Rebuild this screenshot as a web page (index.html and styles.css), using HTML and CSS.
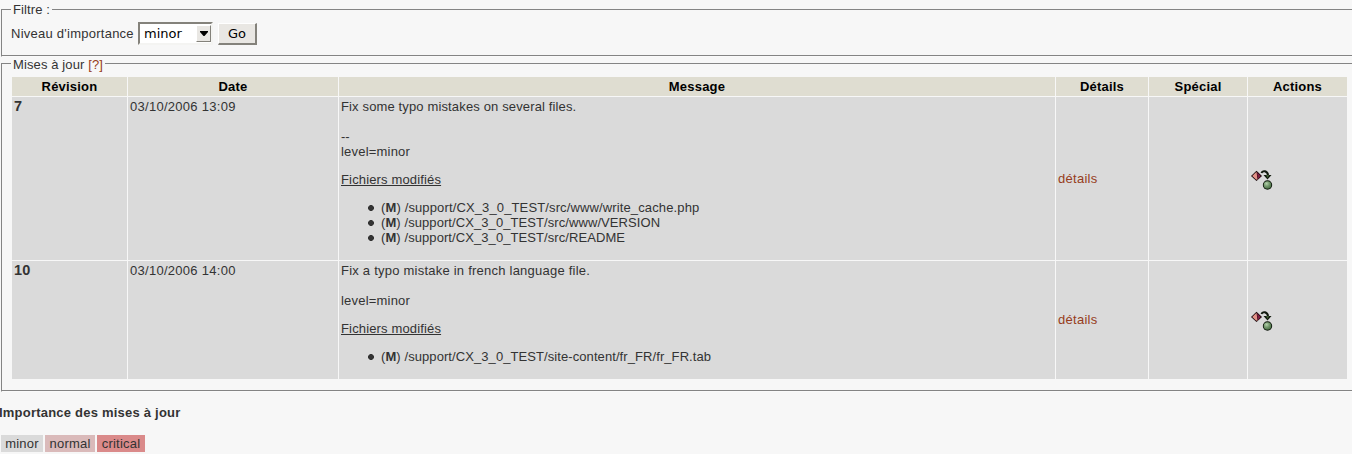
FILE: index.html
```html
<!DOCTYPE html>
<html lang="fr">
<head>
<meta charset="utf-8">
<title>Mises à jour</title>
<link rel="stylesheet" href="styles.css">
</head>
<body>
<svg class="defs" width="0" height="0" aria-hidden="true">
  <defs>
    <radialGradient id="ball" cx="0.38" cy="0.32" r="0.7"><stop offset="0" stop-color="#b4d0ac"/><stop offset="0.5" stop-color="#759a6e"/><stop offset="1" stop-color="#4a6e45"/></radialGradient>
    <symbol id="merge" viewBox="0 0 22 20">
      <path d="M0 6 5.500 0.700 11 6 5.500 11Z" fill="#160508"/>
      <path d="M1.200 6.100 5.500 1.800 6.600 9.700 5 9.400Z" fill="#e29288"/>
      <path d="M6 2.200 9.800 6 6.800 9.300Z" fill="#7c1d40"/>
      <path d="M10.500 3C11 1.200 12.500 1 14 1.300C16 2 17 3.500 17 5.500" fill="none" stroke="#10180d" stroke-width="2"/>
      <path d="M12.500 5H20.500L16.500 9.500Z" fill="#10180d"/>
      <path d="M15 5H18.200L16.600 8Z" fill="#405c35"/>
      <circle cx="16.500" cy="15" r="4.700" fill="#0d160b"/>
      <circle cx="16.500" cy="15" r="3.800" fill="url(#ball)"/>
    </symbol>
  </defs>
</svg>
<fieldset class="box filter">
  <legend>Filtre :</legend>
  <form class="filter-form">
    <label class="filter-label">Niveau d'importance</label>
    <span class="select"><span class="select-value">minor</span><span class="select-button"><svg width="8" height="5" viewBox="0 0 8 5"><path d="M0 0H8V1L4.500 5H3.500L0 1Z" fill="#000"/></svg></span></span>
    <button type="button" class="go">Go</button>
  </form>
</fieldset>
<fieldset class="box updates">
  <legend><span class="legend-text">Mises à jour <a class="link">[?]</a></span></legend>
  <table class="log">
    <colgroup><col class="c-rev"><col class="c-date"><col class="c-msg"><col class="c-details"><col class="c-special"><col class="c-actions"></colgroup>
    <thead>
      <tr><th>Révision</th><th>Date</th><th>Message</th><th>Détails</th><th>Spécial</th><th>Actions</th></tr>
    </thead>
    <tbody>
      <tr class="first">
        <td class="rev">7</td>
        <td class="date">03/10/2006 13:09</td>
        <td class="msg"><span class="tight">Fix some typo mistakes on several files.</span><br><br><span class="dashes">--</span><br>level=minor
          <p class="files-title">Fichiers modifiés</p>
          <ul class="files">
            <li class="tight">(<b>M</b>) /support/CX_3_0_TEST/src/www/write_cache.php</li>
            <li>(<b>M</b>) /support/CX_3_0_TEST/src/www/VERSION</li>
            <li>(<b>M</b>) /support/CX_3_0_TEST/src/README</li>
          </ul>
        </td>
        <td class="middle"><a class="link">détails</a></td>
        <td></td>
        <td class="middle"><svg class="icon" width="22" height="20"><use href="#merge"/></svg></td>
      </tr>
      <tr class="second">
        <td class="rev">10</td>
        <td class="date">03/10/2006 14:00</td>
        <td class="msg"><span class="loose">Fix a typo mistake in french language file.</span><br><br>level=minor
          <p class="files-title">Fichiers modifiés</p>
          <ul class="files">
            <li>(<b>M</b>) /support/CX_3_0_TEST/site-content/fr_FR/fr_FR.tab</li>
          </ul>
        </td>
        <td class="middle raised"><a class="link">détails</a></td>
        <td></td>
        <td class="middle"><svg class="icon" width="22" height="20"><use href="#merge"/></svg></td>
      </tr>
    </tbody>
  </table>
</fieldset>
<h4 class="legend-title">Importance des mises à jour</h4>
<div class="levels"><span class="level minor">minor</span><span class="level normal">normal</span><span class="level critical">critical</span></div>
</body>
</html>
```
FILE: styles.css
```css
* { box-sizing: border-box; }
html { overflow: hidden; }
body {
  margin: 0;
  background: #f7f7f7;
  color: #333;
  font: 13px/15px "Liberation Sans", Arial, sans-serif;
  letter-spacing: 0.2px;
}
.defs { display: block; }
.box {
  margin: 0 -2px -1px 1px;
  border: 1px solid #848484;
  border-bottom-color: #fafafa;
  box-shadow: inset 0 -1px #848484;
  min-width: 0;
}
.box legend { padding: 0 2px; margin: 0; letter-spacing: 0.12px; }
.updates legend { height: 15px; }
.legend-text { display: block; padding-top: 1px; }
.filter { margin-top: 2px; height: 55px; padding: 0 9px; }
.updates { height: 336px; padding: 5px 9px 0; }
.filter-form { display: flex; align-items: center; height: 23px; margin-top: 5px; }
.filter-label { width: 127px; white-space: nowrap; letter-spacing: 0.25px; }
.select {
  display: flex;
  width: 75px;
  height: 23px;
  padding: 1px 0 0 4px;
  background: #fff;
  border: 2px solid #84827b;
  border-right-color: #f4f4f2;
  border-bottom-color: #f4f4f2;
  color: #000;
  font: 13px/17px "DejaVu Sans", sans-serif;
  letter-spacing: 0;
}
.select-value { flex: 1; }
.select-button {
  display: flex;
  align-items: center;
  justify-content: center;
  width: 15px;
  height: 17px;
  background: #e9e7e3;
  border: 1px solid #fff;
  border-right: 1px solid #84827b;
  border-bottom: 1px solid #84827b;
}
.go {
  width: 39px;
  height: 22px;
  margin: 0 0 0 5px;
  padding: 0;
  background: #e9e7e3;
  border: 1px solid #fff;
  border-right: 2px solid #84827b;
  border-bottom: 2px solid #84827b;
  color: #000;
  font: 13px/17px "DejaVu Sans", sans-serif;
}
.link { color: #963c20; }
.log { table-layout: fixed; width: 1337px; border-spacing: 1px; border-collapse: separate; }
.c-rev { width: 115px; }
.c-date { width: 210px; }
.c-msg { width: 716px; }
.c-details { width: 92px; }
.c-special { width: 98px; }
.c-actions { width: 99px; }
.log th { height: 19px; padding: 2px; background: #dfddd1; color: #000; letter-spacing: 0.2px; }
.log td { padding: 2px; background: #dadada; vertical-align: top; }
.log td.middle { vertical-align: middle; letter-spacing: 0.27px; }
.log td.raised { padding-bottom: 4px; }
.first td { height: 163px; }
.second td { height: 118px; }
.log td.rev { font-size: 14.500px; font-weight: bold; }
.log td.date { letter-spacing: 0.28px; }
.tight { letter-spacing: 0.14px; }
.loose { letter-spacing: 0.23px; }
.dashes { letter-spacing: -0.2px; }
.files-title { margin: 13px 0; text-decoration: underline; letter-spacing: 0.15px; }
.files { margin: 13px 0; padding: 0; list-style: none; }
.files li { display: flex; align-items: center; white-space: pre; padding-left: 27px; letter-spacing: 0.08px; }
.files li.tight { letter-spacing: 0.13px; }
.files li::before {
  content: "";
  width: 6px;
  height: 6px;
  margin: 1px 7px 0 0;
  background: #333;
  clip-path: polygon(33% 0, 67% 0, 100% 33%, 100% 67%, 67% 100%, 33% 100%, 0 67%, 0 33%);
}
.icon { display: block; margin: 2px 0 0 1px; }
.legend-title { margin: 14px 0 0 -1px; font-size: 13px; line-height: 15px; letter-spacing: 0.22px; }
.levels { display: flex; gap: 2px; margin: 15px 0 0 1px; }
.level { height: 17px; padding: 1px 0; text-align: center; }
.minor { width: 42px; background: #dadada; }
.normal { width: 50px; background: #dababa; }
.critical { width: 48px; background: #da8a8a; }
```
